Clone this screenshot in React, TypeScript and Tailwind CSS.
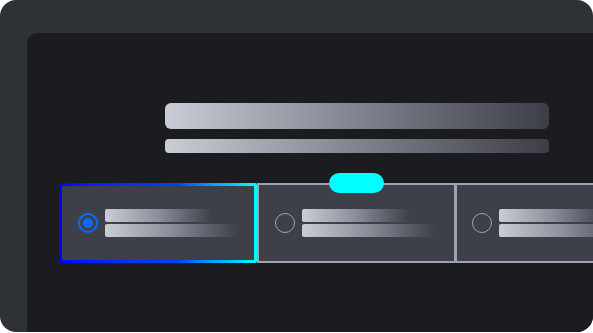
import React from "react";

function Radio({ selected }: { selected?: boolean }) {
  if (selected) {
    return (
      <div className="flex h-[20px] w-[20px] shrink-0 items-center justify-center rounded-full border-2 border-[#0a6cff]">
        <div className="h-[10px] w-[10px] rounded-full bg-[#0a6cff]" />
      </div>
    );
  }
  return <div className="h-[20px] w-[20px] shrink-0 rounded-full border-[1.75px] border-[#9ba3b4]" />;
}

function Lines() {
  return (
    <div className="flex flex-col gap-[2px]">
      <div className="h-[13px] w-[108px] rounded-[2px] bg-gradient-to-r from-[#c9cdd5] via-[#8a8e98] to-[#3d4049]" />
      <div className="h-[13px] w-[133px] rounded-[2px] bg-gradient-to-r from-[#c9cdd5] via-[#8a8e98] to-[#3d4049]" />
    </div>
  );
}

export default function App() {
  return (
    <div className="h-[333px] w-[593px] bg-white">
      <div className="flex h-[332px] w-[593px] overflow-hidden rounded-[16px] bg-[#2e3136] pl-[27px] pt-[33px]">
        <div className="flex-1 rounded-tl-[10px] bg-[#1c1c20] pt-[70px]">
          <div className="ml-[138px] flex w-[384px] flex-col gap-[10px]">
            <div className="h-[26px] rounded-[6px] bg-gradient-to-r from-[#c9cdd5] via-[#80848e] to-[#3c3f47]" />
            <div className="h-[14px] rounded-[4px] bg-gradient-to-r from-[#c9cdd5] via-[#80848e] to-[#3c3f47]" />
          </div>
          <div className="ml-[32px] mt-[30px] flex w-[700px]">
            <div className="h-[80px] w-[198px] shrink-0 rounded-[2px] bg-gradient-to-r from-[#0000ff] via-[#0040ff] via-60% to-[#00ffff] p-[3px]">
              <div className="flex h-full items-center bg-[#3d4049] pl-[16px]">
                <Radio selected />
                <div className="ml-[7px]">
                  <Lines />
                </div>
              </div>
            </div>
            <div className="relative flex h-[80px] w-[199px] shrink-0 items-center border-2 border-[#9ba3b4] bg-[#3d4049] pl-[16px]">
              <div className="absolute left-[70px] top-[-12px] h-[20px] w-[55px] rounded-full bg-[#00ffff]" />
              <Radio />
              <div className="ml-[7px]">
                <Lines />
              </div>
            </div>
            <div className="-ml-px flex h-[80px] w-[199px] shrink-0 items-center border-2 border-[#9ba3b4] bg-[#3d4049] pl-[15px]">
              <Radio />
              <div className="ml-[7px]">
                <Lines />
              </div>
            </div>
          </div>
        </div>
      </div>
    </div>
  );
}
